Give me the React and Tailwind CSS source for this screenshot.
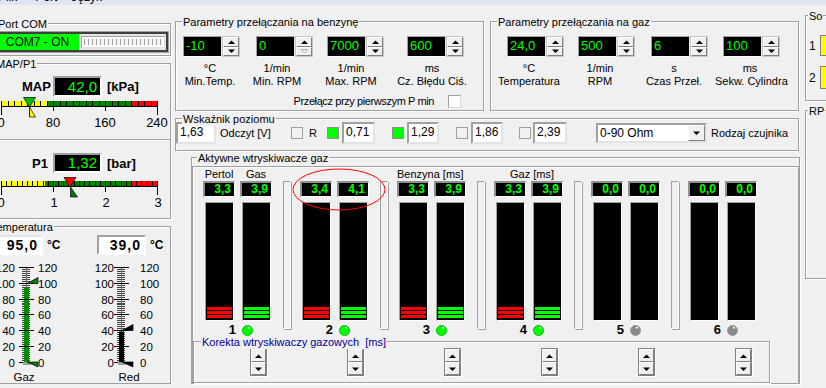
import React from "react";

const ETCH = "border border-[#a0a0a0] shadow-[inset_1px_1px_0_#ffffff,1px_1px_0_#ffffff]";

function Group({ label, className, labelLeft, labelColor, children }) {
  return (
    <div className={"relative " + ETCH + " " + className}>
      <span
        className={
          "absolute -top-[6px] bg-[#f0f0f0] px-[1px] text-[11px] leading-[13px] whitespace-pre " +
          labelLeft +
          " " +
          (labelColor || "text-black")
        }
      >
        {label}
      </span>
      {children}
    </div>
  );
}

function Tri({ dir = "up", color = "#000", hollow = false }) {
  const pts = dir === "up" ? "0,4 3.5,0.5 7,4" : "0,0.5 7,0.5 3.5,4";
  return (
    <svg width="7" height="4" viewBox="0 0 7 4" className="block">
      <polygon points={pts} fill={hollow ? "none" : color} stroke={hollow ? color : "none"} strokeWidth="0.8" />
    </svg>
  );
}

const BTN =
  "flex items-center justify-center bg-[#f0f0f0] border border-t-white border-l-white border-r-[#808080] border-b-[#808080]";

function SpinWidget({ value, downDisabled }) {
  return (
    <div className="flex w-[57px] h-[21px] shrink-0">
      <div className="w-[39px] h-full bg-black border border-t-[#a0a0a0] border-l-[#a0a0a0] border-r-[#e6e6e6] border-b-white text-[#00ff00] text-[13px] leading-[18px] pl-[2px]">
        {value}
      </div>
      <div className="w-[18px] h-full flex flex-col border border-[#c8c8c8]">
        <div className={"flex-1 " + BTN}>
          <Tri dir="up" />
        </div>
        <div className={"flex-1 " + BTN}>
          {downDisabled ? <Tri dir="down" color="#a0a0a0" hollow /> : <Tri dir="down" />}
        </div>
      </div>
    </div>
  );
}

function Lcd({ className, children }) {
  return (
    <div
      className={
        "bg-black border-2 border-t-[#a0a0a0] border-l-[#a0a0a0] border-r-white border-b-white text-[#00ff00] text-right " +
        className
      }
    >
      {children}
    </div>
  );
}

function MapScale() {
  const x = (v) => 1 + v * 0.65;
  const ticks = [];
  for (let v = 0; v <= 240; v += 10) ticks.push(v);
  return (
    <svg width="183" height="33" viewBox="-15 97 183 33" className="block">
      <rect x="1" y="101" width="47" height="5" fill="#ffff00" />
      <rect x="48" y="101" width="83" height="5" fill="#008000" />
      <rect x="131" y="101" width="26" height="5" fill="#ff0000" />
      <line x1="1" x2="157" y1="106.5" y2="106.5" stroke="#000" />
      {ticks.map((v) => {
        const xx = Math.round(x(v)) + 0.5;
        const major = v % 80 === 0;
        const end = v === 0 || v === 240;
        return (
          <line key={v} x1={xx} x2={xx} y1="101" y2={end ? 115 : major ? 111 : 107} stroke="#000" />
        );
      })}
      <line x1="29.5" x2="29.5" y1="98" y2="117" stroke="#000" />
      <polygon points="23.5,97.5 35.5,97.5 29.5,107" fill="#00c000" stroke="#000" strokeWidth="0.7" />
      <polygon points="29.5,107 29.5,117 35.5,117" fill="#ffff00" stroke="#000" strokeWidth="0.7" />
      <g fontSize="13" fontFamily="Liberation Sans, Arial, sans-serif" textAnchor="middle" fill="#000">
        <text x="1" y="127">0</text>
        <text x="53" y="127">80</text>
        <text x="105" y="127">160</text>
        <text x="157" y="127">240</text>
      </g>
    </svg>
  );
}

function P1Scale() {
  const x = (v) => 1 + v * 52;
  const ticks = [];
  for (let i = 0; i <= 30; i++) ticks.push(i);
  return (
    <svg width="183" height="33" viewBox="-15 177 183 33" className="block">
      <rect x="1" y="181" width="44" height="5" fill="#ffff00" />
      <rect x="45" y="181" width="86" height="5" fill="#008000" />
      <rect x="131" y="181" width="26" height="5" fill="#ff0000" />
      <line x1="1" x2="157" y1="186.5" y2="186.5" stroke="#000" />
      {ticks.map((i) => {
        const xx = Math.round(x(i / 10)) + 0.5;
        const major = i % 10 === 0;
        const end = i === 0 || i === 30;
        return <line key={i} x1={xx} x2={xx} y1="181" y2={end ? 195 : major ? 192 : 187} stroke="#000" />;
      })}
      <polygon points="64,177.5 76,177.5 70,187" fill="#ff0000" stroke="#000" strokeWidth="0.7" />
      <polygon points="70.5,187 70.5,197 77.5,197" fill="#008000" stroke="#000" strokeWidth="0.7" />
      <g fontSize="13" fontFamily="Liberation Sans, Arial, sans-serif" textAnchor="middle" fill="#000">
        <text x="1" y="207">0</text>
        <text x="54" y="207">1</text>
        <text x="106" y="207">2</text>
        <text x="158" y="207">3</text>
      </g>
    </svg>
  );
}

function Thermo({ cx, leftEnd, rightStart, value, sp, fill, flag, label, labelX }) {
  const y = (v) => Math.round(362 - v * 0.7933) + 0.5;
  const majors = [0, 20, 40, 60, 80, 100, 120];
  const minors = [];
  for (let v = 0; v <= 120; v += 2.5) minors.push(v);
  const top = y(value);
  const ys = y(sp);
  return (
    <g>
      {minors.map((v) => (
        <line key={"m" + v} x1={cx - 4} x2={cx + 4} y1={y(v)} y2={y(v)} stroke="#404040" />
      ))}
      <line x1={cx + 0.5} x2={cx + 0.5} y1={y(120)} y2={362} stroke="#707070" />
      <rect x={cx - 2} y={top} width={5} height={362 - top} fill={fill} />
      {majors.map((v) => (
        <line key={"M" + v} x1={cx - 7} x2={cx + 8} y1={y(v)} y2={y(v)} stroke="#000" />
      ))}
      <rect x={cx - 3} y={362} width={8} height={3} fill="#a0a0a0" />
      <polygon points={`${cx + 1},${ys} ${cx + 12},${ys - 6} ${cx + 12},${ys}`} fill={flag} stroke="#000" strokeWidth="0.7" />
      <polygon points={`${cx + 1},362 ${cx + 12},362 ${cx + 12},367`} fill={flag} stroke="#000" strokeWidth="0.7" />
      <g fontSize="11.5" fontFamily="Liberation Sans, Arial, sans-serif" fill="#000">
        {majors.map((v) => (
          <text key={"l" + v} x={leftEnd} y={y(v) + 4} textAnchor="end">
            {v}
          </text>
        ))}
        {majors.map((v) => (
          <text key={"r" + v} x={rightStart} y={y(v) + 4}>
            {v}
          </text>
        ))}
        <text x={labelX} y="381" textAnchor="middle">
          {label}
        </text>
      </g>
    </g>
  );
}

function LeftColumn() {
  return (
    <div className="w-[175px] shrink-0 overflow-hidden">
      <Group label="Port COM" className="-ml-[16px] mt-[18px] w-[187px] h-[33px]" labelLeft="left-[12px]">
        <div className="mt-[8px] w-[183px] h-[20px] flex border-2 border-[#404040] shadow-[0_0_0_1px_#a0a0a0]">
          <div className="w-[92px] h-full bg-[#00ff00] flex items-center justify-center pl-[9px] text-[12px] leading-[14px]">
            COM7 - ON
          </div>
          <div className="flex-1 h-full bg-[#e6e6e6] pl-[2px] pr-[1px] py-[2px]">
            <div className="h-full bg-white border border-t-[#a0a0a0] border-l-[#a0a0a0] border-r-[#e0e0e0] border-b-[#e0e0e0] px-[2px] py-[2px]">
              <div className="h-full bg-[repeating-linear-gradient(90deg,#9c9c9c_0px,#9c9c9c_1px,#f6f6f6_1px,#f6f6f6_4px)]" />
            </div>
          </div>
        </div>
      </Group>

      <Group label="MAP/P1" className="-ml-[16px] mt-[7px] w-[187px] h-[156px]" labelLeft="left-[10px]">
        <div className="mt-[12px] flex items-center h-[21px] pl-[37px]">
          <span className="w-[31px] font-bold text-[13px] leading-[15px]">MAP</span>
          <Lcd className="w-[49px] h-[21px] text-[15px] leading-[17px] pr-[3px]">42,0</Lcd>
          <span className="ml-[5px] font-bold text-[13px] leading-[15px]">[kPa]</span>
        </div>
        <MapScale />
        <div className="mt-[9px] h-0 border-t border-[#a0a0a0] shadow-[0_1px_0_#ffffff]" />
        <div className="mt-[13px] flex items-center h-[20px] pl-[47px]">
          <span className="w-[21px] font-bold text-[13px] leading-[15px]">P1</span>
          <Lcd className="w-[49px] h-[20px] text-[15px] leading-[16px] pr-[3px]">1,32</Lcd>
          <span className="ml-[5px] font-bold text-[13px] leading-[15px]">[bar]</span>
        </div>
        <div className="mt-[4px]">
          <P1Scale />
        </div>
      </Group>

      <Group label="Temperatura" className="-ml-[16px] mt-[7px] w-[187px] h-[158px]" labelLeft="left-[5px]">
        <div className="mt-[8px] flex items-center h-[20px]">
          <div className="w-[58px] h-[20px] bg-white border-2 border-t-[#e3e3e3] border-l-[#e3e3e3] border-r-white border-b-white text-right pr-[3px] font-bold text-[14px] leading-[16px] tracking-[1px]">
            95,0
          </div>
          <span className="ml-[4px] w-[50px] font-bold text-[12px] leading-[14px]">°C</span>
          <div className="w-[49px] h-[20px] bg-white border-2 border-t-[#a0a0a0] border-l-[#a0a0a0] border-r-white border-b-white text-right pr-[3px] font-bold text-[14px] leading-[16px] tracking-[1px]">
            39,0
          </div>
          <span className="ml-[4px] font-bold text-[12px] leading-[14px]">°C</span>
        </div>
        <svg width="183" height="128" viewBox="-15 255 183 128" className="block">
          <Thermo cx={26} leftEnd={15} rightStart={38} value={95} sp={100} fill="#008c00" flag="#008000" label="Gaz" labelX={24} />
          <Thermo cx={121} leftEnd={114} rightStart={140} value={39} sp={40} fill="#000" flag="#000" label="Red" labelX={129} />
        </svg>
      </Group>
    </div>
  );
}

function Checkbox({ className }) {
  return <div className={"w-[13px] h-[13px] shrink-0 bg-white border border-t-[#a0a0a0] border-l-[#a0a0a0] border-r-[#dcdcdc] border-b-[#dcdcdc] " + (className || "")} />;
}

function WhiteInput({ className, children }) {
  return (
    <div
      className={
        "h-[22px] shrink-0 bg-white border-2 border-t-[#a0a0a0] border-l-[#a0a0a0] border-r-[#e3e3e3] border-b-[#e3e3e3] text-[12px] leading-[17px] pl-[2px] " +
        className
      }
    >
      {children}
    </div>
  );
}

function GraySq({ className }) {
  return <div className={"w-[12px] h-[12px] shrink-0 border border-[#a0a0a0] bg-[#f0f0f0] " + className} />;
}
function GreenSq({ className }) {
  return <div className={"w-[12px] h-[12px] shrink-0 border border-[#909090] bg-[#00ff00] " + className} />;
}

function Led({ on }) {
  return (
    <svg width="11" height="11" viewBox="0 0 11 11" className="block">
      <circle cx="5.5" cy="5.5" r="5" fill={on ? "#00ff00" : "#8a8a8a"} stroke={on ? "#00c000" : "#9a9a9a"} strokeWidth="1" />
      <rect x="6" y="2" width="2" height="1.5" fill="#ffffff" />
    </svg>
  );
}

function Bar({ color }) {
  return (
    <div className="w-[29px] h-full bg-black border border-t-[#a0a0a0] border-l-[#a0a0a0] border-r-white border-b-white flex flex-col justify-end gap-[1px] px-[1px] pb-[2px]">
      {color ? (
        <>
          <div className={"h-[3px] " + color} />
          <div className={"h-[3px] " + color} />
          <div className={"h-[3px] " + color} />
        </>
      ) : null}
    </div>
  );
}

function ValBox({ v }) {
  return (
    <div className="w-[32px] h-[16px] bg-black border-t-2 border-l-2 border-r border-b border-t-[#909090] border-l-[#909090] border-r-white border-b-white text-[#00ff00] font-bold text-[12px] leading-[13px] text-right pr-[3px]">
      {v}
    </div>
  );
}

const INJ = [
  { n: 1, a: "3,3", b: "3,9", on: true, head: "pg" },
  { n: 2, a: "3,4", b: "4,1", on: true },
  { n: 3, a: "3,3", b: "3,9", on: true, head: "Benzyna [ms]" },
  { n: 4, a: "3,3", b: "3,9", on: true, head: "Gaz [ms]" },
  { n: 5, a: "0,0", b: "0,0", on: false },
  { n: 6, a: "0,0", b: "0,0", on: false },
];

function Injector({ d }) {
  return (
    <div className="w-[80px] shrink-0 flex flex-col">
      <div className="h-[14px] flex text-[11px] leading-[14px] whitespace-nowrap">
        {d.head === "pg" ? (
          <>
            <span className="w-[32px] text-center">Pertol</span>
            <span className="ml-[5px] w-[32px] text-center">Gas</span>
          </>
        ) : d.head === "Benzyna [ms]" ? (
          <span className="w-[62px] text-center">Benzyna [ms]</span>
        ) : d.head ? (
          <span className="w-[76px] text-center">{d.head}</span>
        ) : null}
      </div>
      <div className="h-[16px] flex gap-[5px]">
        <ValBox v={d.a} />
        <ValBox v={d.b} />
      </div>
      <div className="mt-[5px] h-[119px] flex pl-[2px] gap-[8px]">
        <Bar color={d.on ? "bg-[#ff0000]" : ""} />
        <Bar color={d.on ? "bg-[#00ff00]" : ""} />
      </div>
      <div className="mt-[3px] h-[12px] flex items-center">
        <span className="w-[33px] text-right font-bold text-[13px] leading-[12px]">{d.n}</span>
        <span className="ml-[6px]">
          <Led on={d.on} />
        </span>
      </div>
    </div>
  );
}

function KSpin({ className }) {
  return (
    <div className={"w-[17px] h-[28px] shrink-0 flex flex-col border border-[#808080] shadow-[1px_1px_0_#ffffff] " + (className || "")}>
      <div className={"flex-1 " + BTN}>
        <Tri dir="up" />
      </div>
      <div className={"flex-1 " + BTN}>
        <Tri dir="down" />
      </div>
    </div>
  );
}

function Middle() {
  return (
    <div className="w-[625px] shrink-0">
      <div className="flex mt-[16px]">
        <Group label="Parametry przełączania na benzynę" className="w-[309px] h-[90px]" labelLeft="left-[6px]">
          <div className="mt-[14px] pl-[7px] flex">
            <SpinWidget value="-10" />
            <div className="ml-[16px]">
              <SpinWidget value="0" downDisabled />
            </div>
            <div className="ml-[14px]">
              <SpinWidget value="7000" />
            </div>
            <div className="ml-[23px]">
              <SpinWidget value="600" />
            </div>
          </div>
          <div className="mt-[5px] flex text-[11px] leading-[13px] text-center whitespace-nowrap">
            <div className="w-[68px]">°C<br />Min.Temp.</div>
            <div className="w-[66px]">1/min<br />Min. RPM</div>
            <div className="w-[82px]">1/min<br />Max. RPM</div>
            <div className="w-[80px]">ms<br />Cz. Błędu Ciś.</div>
          </div>
          <div className="mt-[7px] h-[13px] flex items-center justify-end pr-[22px]">
            <span className="text-[11px] leading-[13px] tracking-[-0.4px]">Przełącz przy pierwszym P min</span>
            <Checkbox className="ml-[14px]" />
          </div>
        </Group>
        <Group label="Parametry przełączania na gaz" className="ml-[6px] w-[309px] h-[90px]" labelLeft="left-[6px]">
          <div className="mt-[14px] pl-[16px] flex">
            <SpinWidget value="24,0" />
            <div className="ml-[14px]">
              <SpinWidget value="500" />
            </div>
            <div className="ml-[16px]">
              <SpinWidget value="6" />
            </div>
            <div className="ml-[15px]">
              <SpinWidget value="100" />
            </div>
          </div>
          <div className="mt-[5px] flex text-[11px] leading-[13px] text-center whitespace-nowrap">
            <div className="w-[76px]">°C<br />Temperatura</div>
            <div className="w-[66px]">1/min<br />RPM</div>
            <div className="w-[82px]">s<br />Czas Przeł.</div>
            <div className="w-[70px]">ms<br />Sekw. Cylindra</div>
          </div>
        </Group>
      </div>

      <Group label="Wskaźnik poziomu" className="mt-[7px] w-[624px] h-[33px]" labelLeft="left-[6px]">
        <div className="mt-[3px] h-[22px] flex items-center text-[11px] leading-[13px]">
          <WhiteInput className="w-[40px]">1,63</WhiteInput>
          <span className="ml-[4px] w-[71px]">Odczyt [V]</span>
          <GraySq className="" />
          <span className="ml-[6px] w-[18px]">R</span>
          <GreenSq className="" />
          <WhiteInput className="ml-[3px] w-[33px]">0,71</WhiteInput>
          <GreenSq className="ml-[17px]" />
          <WhiteInput className="ml-[3px] w-[32px]">1,29</WhiteInput>
          <GraySq className="ml-[17px]" />
          <WhiteInput className="ml-[3px] w-[32px]">1,86</WhiteInput>
          <GraySq className="ml-[16px]" />
          <WhiteInput className="ml-[2px] w-[34px]">2,39</WhiteInput>
          <div className="ml-[29px] w-[111px] h-[20px] flex bg-white border-2 border-t-[#a0a0a0] border-l-[#a0a0a0] border-r-[#e3e3e3] border-b-[#e3e3e3]">
            <span className="flex-1 text-[12px] leading-[16px] pl-[2px]">0-90 Ohm</span>
            <div className={"w-[17px] h-full " + BTN}>
              <Tri dir="down" />
            </div>
          </div>
          <span className="ml-[4px]">Rodzaj czujnika</span>
        </div>
      </Group>

      <Group label="Aktywne wtryskiwacze gaz" className="mt-[6px] ml-[16px] w-[609px] h-[227px]" labelLeft="left-[5px]">
        <div className="mt-[8px] h-[217px] border-t border-l border-r border-[#a0a0a0] shadow-[inset_1px_1px_0_#ffffff]">
          <div className="flex pl-[10px]">
            {INJ.map((d, i) => (
              <React.Fragment key={d.n}>
                <Injector d={d} />
                {i < 5 ? (
                  <div className="w-[8px] h-[148px] mt-[14px] mr-[9px] shrink-0 bg-[#f0f0f0] border border-t-[#a0a0a0] border-l-[#a0a0a0] border-r-white border-b-white shadow-[1px_1px_0_#a0a0a0]" />
                ) : null}
              </React.Fragment>
            ))}
          </div>
          <Group
            label="Korekta wtryskiwaczy gazowych  [ms]"
            className="mt-[5px] w-[577px] h-[42px]"
            labelLeft="left-[7px]"
            labelColor="text-[#000099]"
          >
            <div className="mt-[6px] pl-[56px] flex">
              <KSpin />
              <KSpin className="ml-[80px]" />
              <KSpin className="ml-[80px]" />
              <KSpin className="ml-[80px]" />
              <KSpin className="ml-[80px]" />
              <KSpin className="ml-[80px]" />
            </div>
          </Group>
        </div>
      </Group>
    </div>
  );
}

function RightPanel() {
  return (
    <div className="ml-[5px] w-[40px] shrink-0">
      <Group label="So" className="mt-[10px] w-[40px] h-[86px]" labelLeft="left-[2px]">
        <div className="mt-[19px] flex items-center h-[21px]">
          <span className="ml-[3px] w-[11px] text-[12px] leading-[14px]">1</span>
          <div className="w-[20px] h-[21px] bg-[#ffff00] border border-[#808080]" />
        </div>
        <div className="mt-[10px] flex items-center h-[23px]">
          <span className="ml-[3px] w-[11px] text-[12px] leading-[14px]">2</span>
          <div className="w-[20px] h-[23px] bg-[#ffff00] border border-[#808080]" />
        </div>
      </Group>
      <Group label="RP" className="mt-[9px] w-[40px] h-[169px]" labelLeft="left-[2px]" />
    </div>
  );
}

export default function App() {
  return (
    <div className="relative w-[826px] h-[388px] overflow-hidden bg-[#f0f0f0] font-['Liberation_Sans',Arial,sans-serif] text-[11px] text-black">
      <div className="h-[5px] overflow-hidden bg-[#dfe6f3] flex text-[12px] leading-[14px]">
        <span className="-mt-[10px] -ml-[2px]">Plik</span>
        <span className="-mt-[10px] ml-[18px]">Port</span>
        <span className="-mt-[10px] ml-[14px]">Język</span>
      </div>
      <div className="flex">
        <LeftColumn />
        <Middle />
        <RightPanel />
      </div>
      <svg width="94" height="43" viewBox="0 0 94 43" className="absolute left-[292px] top-[168px] pointer-events-none">
        <ellipse cx="47" cy="21.5" rx="46" ry="20.5" fill="none" stroke="#ff0000" strokeWidth="1" />
      </svg>
    </div>
  );
}
